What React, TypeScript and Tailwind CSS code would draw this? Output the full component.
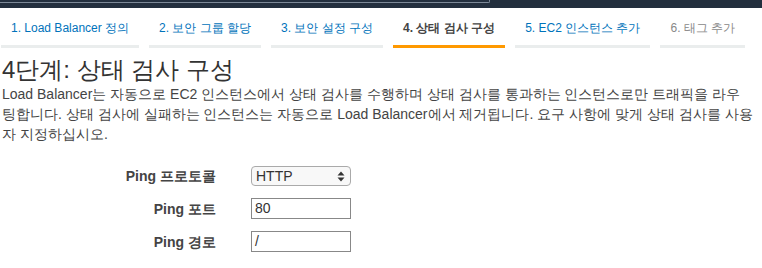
import React from "react";

const tabs = [
  { label: "1. Load Balancer 정의", state: "link" },
  { label: "2. 보안 그룹 할당", state: "link" },
  { label: "3. 보안 설정 구성", state: "link" },
  { label: "4. 상태 검사 구성", state: "active" },
  { label: "5. EC2 인스턴스 추가", state: "link" },
  { label: "6. 태그 추가", state: "disabled" },
];

function FormRow({ label, children }: { label: string; children: React.ReactNode }) {
  return (
    <div className="flex items-center">
      <div className="w-[216px] text-right text-[14px] leading-[16px] font-bold text-[#444]">{label}</div>
      <div className="ml-[35px]">{children}</div>
    </div>
  );
}

export default function App() {
  return (
    <div className="w-[762px] h-[268px] bg-white overflow-hidden font-['Liberation_Sans',sans-serif]">
      <div className="h-[8px] bg-[#232f3e] relative">
        <div className="absolute left-0 top-0 w-[490px] h-[3px] border-b border-r border-[#7d8998] rounded-br-[2px]" />
      </div>
      <div className="flex gap-[10px] pl-[1px] mt-[11px]">
        {tabs.map((t) => (
          <div
            key={t.label}
            className={
              "px-[10px] pb-[9px] pt-[1px] text-[12px] leading-[16px] border-b-[3px] whitespace-nowrap " +
              (t.state === "active"
                ? "border-[#ff9900] text-[#444] font-bold"
                : t.state === "disabled"
                ? "border-[#eaeded] text-[#888]"
                : "border-[#eaeded] text-[#0073bb]")
            }
          >
            {t.label}
          </div>
        ))}
      </div>
      <h1 className="text-[24px] leading-[28px] text-[#333] pl-[2px] mt-[8px]">4단계: 상태 검사 구성</h1>
      <p className="text-[14px] leading-[20px] text-[#444] pl-[2px] whitespace-nowrap">
        Load Balancer는 자동으로 EC2 인스턴스에서 상태 검사를 수행하며 상태 검사를 통과하는 인스턴스로만 트래픽을 라우
        <br />
        팅합니다. 상태 검사에 실패하는 인스턴스는 자동으로 Load Balancer에서 제거됩니다. 요구 사항에 맞게 상태 검사를 사용
        <br />
        자 지정하십시오.
      </p>
      <div className="mt-[22px] flex flex-col gap-[12px]">
        <FormRow label="Ping 프로토콜">
          <div className="w-[100px] h-[20px] rounded-[4px] border border-[#aaa] bg-[#f8f8f8] flex items-center justify-between pl-[4px] pr-[5px] text-[14px] text-[#333]">
            <span>HTTP</span>
            <svg width="8" height="11" viewBox="0 0 8 11">
              <path d="M4 0.5 L7.5 4.5 H0.5 Z" fill="#333" />
              <path d="M4 10.5 L7.5 6.5 H0.5 Z" fill="#333" />
            </svg>
          </div>
        </FormRow>
        <FormRow label="Ping 포트">
          <div className="w-[100px] h-[21px] border border-[#888] flex items-center px-[3px] text-[14px] text-[#333]">80</div>
        </FormRow>
        <FormRow label="Ping 경로">
          <div className="w-[100px] h-[21px] border border-[#888] flex items-center px-[3px] text-[14px] text-[#333]">/</div>
        </FormRow>
      </div>
    </div>
  );
}
